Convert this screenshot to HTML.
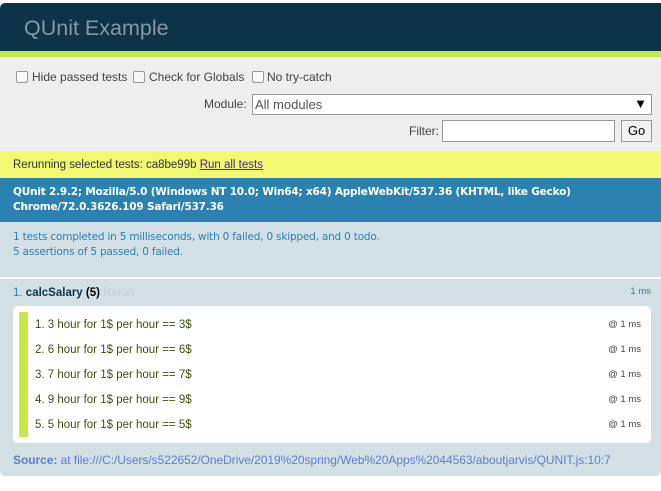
<!DOCTYPE html>
<html><head><meta charset="utf-8"><style>
*{margin:0;padding:0;box-sizing:border-box}
body{width:661px;height:491px;background:#fff;font-family:"Liberation Sans",sans-serif;font-size:11.5px;overflow:hidden;position:relative}
.hdr{position:absolute;left:0;top:3px;width:661px;height:49px;background:#0d3349;border-radius:5px 0 0 0;color:#8699a4;font-size:21.5px;padding:13px 0 0 24px}
.grn{position:absolute;left:0;top:51px;width:661px;height:6px;background:#c6e746}
.tb{position:absolute;left:0;top:57px;width:661px;height:94px;background:#eee}
.cb{position:absolute;top:71px;width:12px;height:12px;border:1px solid #999;border-radius:2px;background:#f8f8f8}
.lab{position:absolute;top:70px;font-size:12px;color:#444}
.sel{position:absolute;left:252px;top:94px;width:400px;height:21px;border:1px solid #999;background:#fff;font-size:13px;color:#555;padding:2px 0 0 2px}
.filt{position:absolute;left:442px;top:120px;width:173px;height:22px;border:1px solid #999;background:#fff}
.go{position:absolute;left:621px;top:120px;width:31px;height:22px;border:1px solid #999;background:#f2f2f2;font-size:13px;text-align:center;padding-top:2px;color:#000}
.yel{position:absolute;left:0;top:151px;width:661px;height:27px;background:#f2f774;color:#333;font-size:11.5px;padding:8px 0 0 13px}
.yel u{color:#551a8b}
.ban{position:absolute;left:0;top:178px;width:661px;height:44px;background:#2b81af;color:#fff;font-family:"DejaVu Sans",sans-serif;font-weight:bold;font-size:10.5px;line-height:15px;padding:7px 0 0 13px;letter-spacing:-0.2px}
.res{position:absolute;left:0;top:222px;width:661px;height:55px;background:#d2e0e6;color:#2b81af;font-family:"DejaVu Sans",sans-serif;font-size:10.5px;line-height:15px;padding:8px 0 0 13px;letter-spacing:-0.2px}
.item{position:absolute;left:0;top:279px;width:661px;height:197px;background:#d2e0e6;border-radius:0 0 5px 5px}
.tn{position:absolute;left:13px;top:287px;font-size:11.5px;color:#366097}
.tn b{color:#000;font-weight:bold}
.tn .n{color:#2b81af}
.rr{color:#c2ccd1}
.ms{position:absolute;right:10px;top:286px;font-size:9.5px;color:#2b81af}
.box{position:absolute;left:13px;top:306px;width:638px;height:137px;background:#fff;border-radius:5px}
.bar{position:absolute;left:19px;top:312px;width:9px;height:125px;background:#c6e746}
.row{position:absolute;left:35px;font-size:11.5px;color:#3c510c}
.at{position:absolute;right:20px;font-size:9.5px;color:#444}
.src{position:absolute;left:13px;top:453px;font-size:12px;letter-spacing:-0.05px;color:#5f7fc6}
</style></head><body>
<div class="hdr">QUnit Example</div>
<div class="grn"></div>
<div class="tb"></div>
<div class="cb" style="left:16px"></div><div class="lab" style="left:32px">Hide passed tests</div>
<div class="cb" style="left:133px"></div><div class="lab" style="left:149px">Check for Globals</div>
<div class="cb" style="left:252px"></div><div class="lab" style="left:267px">No try-catch</div>
<div class="lab" style="left:204px;top:97px">Module:</div>
<div class="sel">All modules<span style="position:absolute;right:4px;top:1px;color:#000;font-size:13px">▼</span></div>
<div class="lab" style="left:409px;top:124px">Filter:</div>
<div class="filt"></div><div class="go">Go</div>
<div class="yel">Rerunning selected tests: ca8be99b <u>Run all tests</u></div>
<div class="ban">QUnit 2.9.2; Mozilla/5.0 (Windows NT 10.0; Win64; x64) AppleWebKit/537.36 (KHTML, like Gecko)<br>Chrome/72.0.3626.109 Safari/537.36</div>
<div class="res">1 tests completed in 5 milliseconds, with 0 failed, 0 skipped, and 0 todo.<br>5 assertions of 5 passed, 0 failed.</div>
<div class="item"></div>
<div class="tn"><span class="n">1. </span><span style="color:#0d3349;font-weight:bold">calcSalary</span> <b>(5)</b> <span class="rr">Rerun</span></div>
<div class="ms">1 ms</div>
<div class="box"></div>
<div class="bar"></div>
<div class="row" style="top:319px">1. 3 hour for 1$ per hour == 3$</div><div class="at" style="top:319px">@ 1 ms</div>
<div class="row" style="top:344px">2. 6 hour for 1$ per hour == 6$</div><div class="at" style="top:344px">@ 1 ms</div>
<div class="row" style="top:369px">3. 7 hour for 1$ per hour == 7$</div><div class="at" style="top:369px">@ 1 ms</div>
<div class="row" style="top:394px">4. 9 hour for 1$ per hour == 9$</div><div class="at" style="top:394px">@ 1 ms</div>
<div class="row" style="top:419px">5. 5 hour for 1$ per hour == 5$</div><div class="at" style="top:419px">@ 1 ms</div>
<div class="src"><b>Source:</b> at file:///C:/Users/s522652/OneDrive/2019%20spring/Web%20Apps%2044563/aboutjarvis/QUNIT.js:10:7</div>
</body></html>
